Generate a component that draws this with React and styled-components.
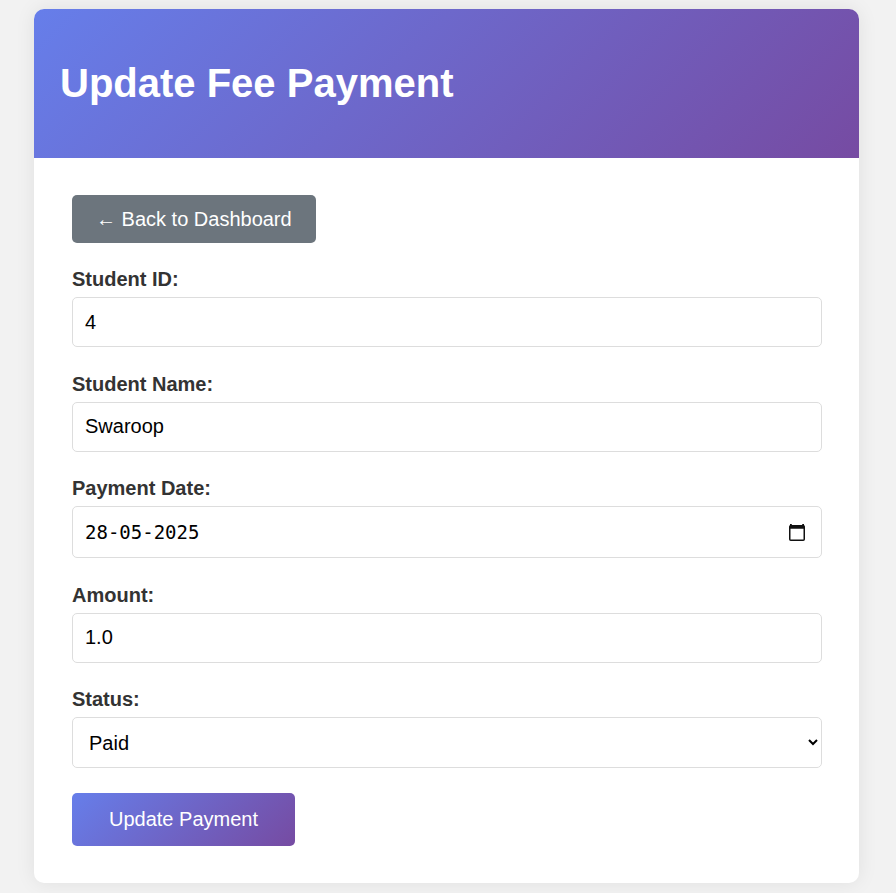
import React, { useState } from 'react';
import styled, { createGlobalStyle } from 'styled-components';

const GlobalStyle = createGlobalStyle`
  html, body {
    margin: 0;
    padding: 0;
    background: #f2f2f2;
    font-family: "Liberation Sans", Arial, sans-serif;
  }
`;

const Page = styled.div`
  padding: 9px 37px 10px 34px;
`;

const Card = styled.div`
  width: 825px;
  background: #ffffff;
  border-radius: 10px;
  overflow: hidden;
  box-shadow: 0 0 20px rgba(0, 0, 0, 0.08);
`;

const Header = styled.header`
  height: 149px;
  display: flex;
  align-items: center;
  padding: 0 26px;
  background: linear-gradient(135deg, #667eea 0%, #764ba2 100%);
`;

const Title = styled.h1`
  margin: 0;
  color: #ffffff;
  font-size: 40px;
  font-weight: 700;
`;

const Body = styled.div`
  padding: 37px 37px 37px 38px;
`;

const BackButton = styled.button`
  display: inline-flex;
  align-items: center;
  height: 48px;
  padding: 0 24px;
  margin-bottom: 24px;
  border: none;
  border-radius: 5px;
  background: #6c757d;
  color: #ffffff;
  font-family: "Liberation Sans", Arial, sans-serif;
  font-size: 20px;
  cursor: pointer;
`;

const Group = styled.div`
  display: flex;
  flex-direction: column;
  margin-bottom: 24.5px;
`;

const Label = styled.label`
  display: block;
  margin-bottom: 6px;
  line-height: 24px;
  color: #333333;
  font-size: 20px;
  font-weight: 700;
`;

const Input = styled.input`
  box-sizing: border-box;
  width: 100%;
  height: ${p => p.$h || 50}px;
  padding: 0 12px;
  border: 1px solid #dddddd;
  border-radius: 5px;
  color: #000000;
  font-family: ${p => p.$mono ? '"DejaVu Sans Mono", monospace' : '"Liberation Sans", Arial, sans-serif'};
  font-size: ${p => p.$mono ? 19 : 20}px;
  background: #ffffff;
  outline: none;
`;

const DateField = styled.div`
  position: relative;
`;

const CalendarButton = styled.span`
  position: absolute;
  right: 17px;
  top: 17px;
  width: 16px;
  height: 18px;
  display: flex;
  pointer-events: none;
`;

const Select = styled.select`
  box-sizing: border-box;
  width: 100%;
  height: 51px;
  padding: 0 12px;
  border: 1px solid #dddddd;
  border-radius: 5px;
  color: #000000;
  font-family: "Liberation Sans", Arial, sans-serif;
  font-size: 20px;
  background: #ffffff;
  outline: none;
`;

const SubmitButton = styled.button`
  height: 53px;
  padding: 0 37px;
  border: none;
  border-radius: 5px;
  background: linear-gradient(135deg, #667eea 0%, #764ba2 100%);
  color: #ffffff;
  font-family: "Liberation Sans", Arial, sans-serif;
  font-size: 20px;
  cursor: pointer;
`;

const CalendarIcon = () => (
  <svg width="16" height="18" viewBox="0 0 16 18">
    <rect x="1" y="1" width="1.8" height="3" fill="#111" />
    <rect x="13.2" y="1" width="1.8" height="3" fill="#111" />
    <rect x="0.75" y="2.75" width="14.5" height="14.5" rx="1" fill="none" stroke="#111" strokeWidth="1.5" />
    <rect x="0.75" y="2.75" width="14.5" height="3" fill="#111" />
  </svg>
);

const App = () => {
  const [form, setForm] = useState({
    id: '4',
    name: 'Swaroop',
    date: '28-05-2025',
    amount: '1.0',
    status: 'Paid',
  });

  const update = key => e => setForm({ ...form, [key]: e.target.value });

  return (
    <>
      <GlobalStyle />
      <Page>
        <Card>
          <Header>
            <Title>Update Fee Payment</Title>
          </Header>
          <Body>
            <BackButton type="button">← Back to Dashboard</BackButton>
            <form onSubmit={e => e.preventDefault()}>
              <Group>
                <Label htmlFor="sid">Student ID:</Label>
                <Input id="sid" value={form.id} onChange={update('id')} />
              </Group>
              <Group>
                <Label htmlFor="sname">Student Name:</Label>
                <Input id="sname" value={form.name} onChange={update('name')} />
              </Group>
              <Group>
                <Label htmlFor="pdate">Payment Date:</Label>
                <DateField>
                  <Input id="pdate" $mono $h={52} value={form.date} onChange={update('date')} />
                  <CalendarButton>
                    <CalendarIcon />
                  </CalendarButton>
                </DateField>
              </Group>
              <Group>
                <Label htmlFor="amount">Amount:</Label>
                <Input id="amount" value={form.amount} onChange={update('amount')} />
              </Group>
              <Group>
                <Label htmlFor="status">Status:</Label>
                <Select id="status" value={form.status} onChange={update('status')}>
                  <option>Paid</option>
                  <option>Pending</option>
                  <option>Overdue</option>
                </Select>
              </Group>
              <SubmitButton type="submit">Update Payment</SubmitButton>
            </form>
          </Body>
        </Card>
      </Page>
    </>
  );
};

export default App;
